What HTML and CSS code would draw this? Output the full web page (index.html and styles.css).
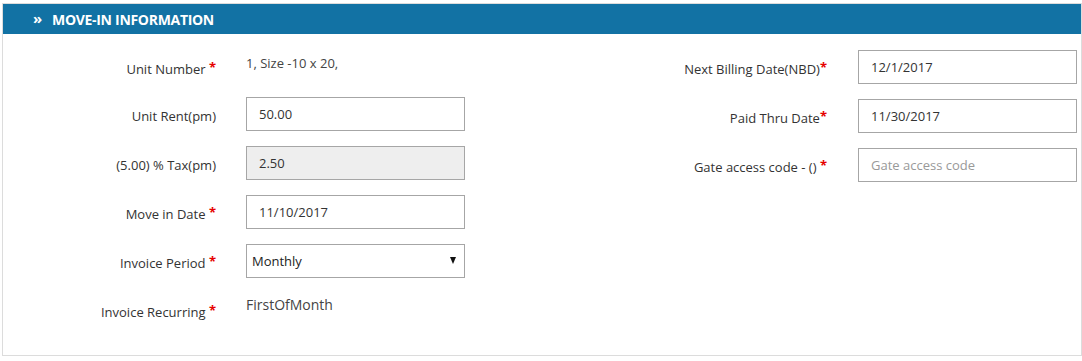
FILE: index.html
```html
<!DOCTYPE html>
<html>
<head>
<meta charset="utf-8">
<link rel="stylesheet" href="styles.css">
</head>
<body>
<div class="panel">
  <div class="panel-head"><span class="chev">»</span><span class="title">MOVE-IN INFORMATION</span></div>
  <div class="panel-body">
    <div class="col col-left">
      <div class="row static">
        <label class="lbl">Unit Number <span class="req">*</span></label>
        <div class="val">1, Size -10 x 20,</div>
      </div>
      <div class="row">
        <label class="lbl">Unit Rent(pm)</label>
        <input class="inp" type="text" value="50.00">
      </div>
      <div class="row">
        <label class="lbl">(5.00) % Tax(pm)</label>
        <input class="inp" type="text" value="2.50" disabled>
      </div>
      <div class="row">
        <label class="lbl">Move in Date <span class="req">*</span></label>
        <input class="inp" type="text" value="11/10/2017">
      </div>
      <div class="row">
        <label class="lbl">Invoice Period <span class="req">*</span></label>
        <div class="sel"><span>Monthly</span><span class="arrow"></span></div>
      </div>
      <div class="row static">
        <label class="lbl">Invoice Recurring <span class="req">*</span></label>
        <div class="val val-lg">FirstOfMonth</div>
      </div>
    </div>
    <div class="col col-right">
      <div class="row">
        <label class="lbl">Next Billing Date(NBD)<span class="req">*</span></label>
        <input class="inp" type="text" value="12/1/2017">
      </div>
      <div class="row">
        <label class="lbl">Paid Thru Date<span class="req">*</span></label>
        <input class="inp" type="text" value="11/30/2017">
      </div>
      <div class="row">
        <label class="lbl">Gate access code - () <span class="req">*</span></label>
        <input class="inp" type="text" placeholder="Gate access code">
      </div>
    </div>
  </div>
</div>
</body>
</html>
```

FILE: styles.css
```css
* { box-sizing: border-box; }
html, body { margin: 0; padding: 0; background: #fff; }
body {
  padding: 3px 0 0 2px;
  font-family: "Open Sans", "DejaVu Sans", sans-serif;
  font-size: 13px;
  color: #333;
}
.panel {
  width: 1080px;
  border: 1px solid #dcdcdc;
  background: #fff;
}
.panel-head {
  height: 30px;
  background: #1272a4;
  color: #fff;
  font-weight: 700;
  font-size: 14px;
  display: flex;
  align-items: center;
  padding-left: 30px;
}
.chev { font-size: 15px; width: 19px; margin-top: -2px; text-align: left; }
.title { letter-spacing: -0.3px; }
.panel-body {
  display: flex;
  padding: 16px 4px 15px 0;
}
.col { display: grid; align-content: start; }
.col-left { grid-template-columns: 213px 219px; column-gap: 30px; }
.col-right { margin-left: auto; grid-template-columns: 250px 219px; column-gap: 31px; }
.row { display: contents; }
.lbl {
  text-align: right;
  padding-top: 10px;
  line-height: 19px;
  height: 34px;
  margin-bottom: 15px;
  color: #333;
  white-space: nowrap;
}
.static .lbl { height: 32px; }
.req { color: #e60000; font-size: 13px; font-weight: 700; position: relative; top: -2px; }
.val {
  padding-top: 4px;
  line-height: 19px;
  color: #444;
  height: 32px;
  margin-bottom: 15px;
}
.val-lg { font-size: 14px; padding-top: 2px; }
.inp {
  width: 219px;
  height: 34px;
  margin: 0 0 15px 0;
  border: 1px solid #a6a6a6;
  border-radius: 0;
  padding: 0 12px;
  font-family: "Open Sans", "DejaVu Sans", sans-serif;
  font-size: 13px;
  color: #333;
  background: #fff;
  outline: none;
}
.inp:disabled { background: #eeeeee; color: #333; }
.inp::placeholder { color: #999; }
.sel {
  width: 219px;
  height: 34px;
  margin-bottom: 15px;
  border: 1px solid #a6a6a6;
  padding: 0 8px 0 5px;
  display: flex;
  align-items: center;
  justify-content: space-between;
  color: #222;
}
.arrow {
  width: 0; height: 0;
  border-left: 3.5px solid transparent;
  border-right: 3.5px solid transparent;
  border-top: 7px solid #111;
  margin-top: -2px;
}
```
